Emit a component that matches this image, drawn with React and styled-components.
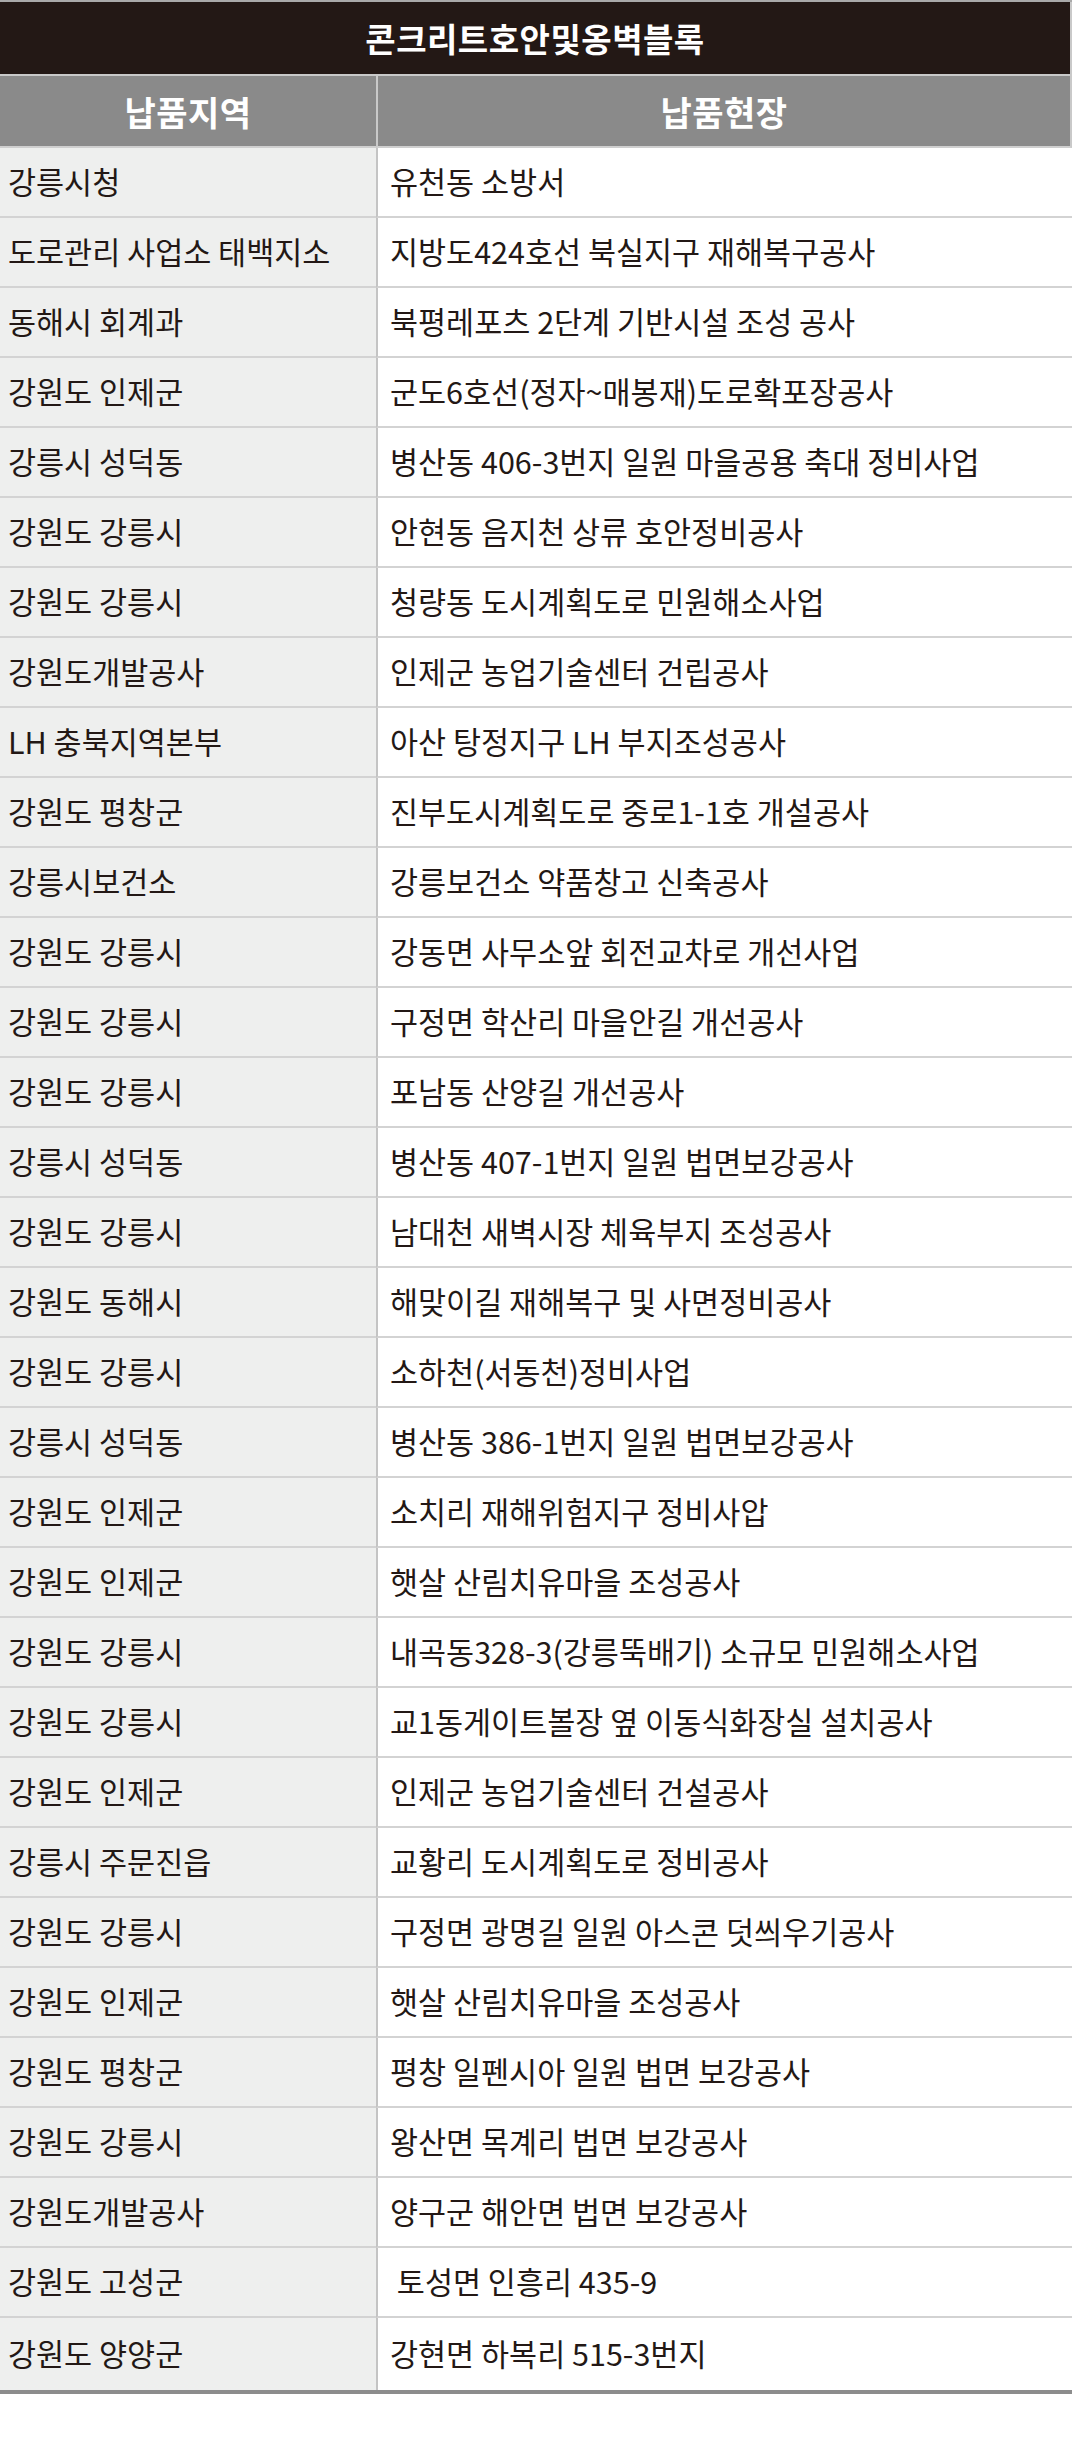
import React from 'react';
import styled, { createGlobalStyle } from 'styled-components';

const GlobalStyle = createGlobalStyle`
    html, body {
        margin: 0;
        padding: 0;
        background: #ffffff;
    }
    body {
        font-family: "Noto Sans CJK KR", "Noto Sans", sans-serif;
        color: #231815;
    }
`;

const deliveries = [
    ['강릉시청', '유천동 소방서'],
    ['도로관리 사업소 태백지소', '지방도424호선 북실지구 재해복구공사'],
    ['동해시 회계과', '북평레포츠 2단계 기반시설 조성 공사'],
    ['강원도 인제군', '군도6호선(정자~매봉재)도로확포장공사'],
    ['강릉시 성덕동', '병산동 406-3번지 일원 마을공용 축대 정비사업'],
    ['강원도 강릉시', '안현동 음지천 상류 호안정비공사'],
    ['강원도 강릉시', '청량동 도시계획도로 민원해소사업'],
    ['강원도개발공사', '인제군 농업기술센터 건립공사'],
    ['LH 충북지역본부', '아산 탕정지구 LH 부지조성공사'],
    ['강원도 평창군', '진부도시계획도로 중로1-1호 개설공사'],
    ['강릉시보건소', '강릉보건소 약품창고 신축공사'],
    ['강원도 강릉시', '강동면 사무소앞 회전교차로 개선사업'],
    ['강원도 강릉시', '구정면 학산리 마을안길 개선공사'],
    ['강원도 강릉시', '포남동 산양길 개선공사'],
    ['강릉시 성덕동', '병산동 407-1번지 일원 법면보강공사'],
    ['강원도 강릉시', '남대천 새벽시장 체육부지 조성공사'],
    ['강원도 동해시', '해맞이길 재해복구 및 사면정비공사'],
    ['강원도 강릉시', '소하천(서동천)정비사업'],
    ['강릉시 성덕동', '병산동 386-1번지 일원 법면보강공사'],
    ['강원도 인제군', '소치리 재해위험지구 정비사압'],
    ['강원도 인제군', '햇살 산림치유마을 조성공사'],
    ['강원도 강릉시', '내곡동328-3(강릉뚝배기) 소규모 민원해소사업'],
    ['강원도 강릉시', '교1동게이트볼장 옆 이동식화장실 설치공사'],
    ['강원도 인제군', '인제군 농업기술센터 건설공사'],
    ['강릉시 주문진읍', '교황리 도시계획도로 정비공사'],
    ['강원도 강릉시', '구정면 광명길 일원 아스콘 덧씌우기공사'],
    ['강원도 인제군', '햇살 산림치유마을 조성공사'],
    ['강원도 평창군', '평창 일펜시아 일원 법면 보강공사'],
    ['강원도 강릉시', '왕산면 목계리 법면 보강공사'],
    ['강원도개발공사', '양구군 해안면 법면 보강공사'],
    ['강원도 고성군', '\u00a0토성면 인흥리 435-9'],
    ['강원도 양양군', '강현면 하복리 515-3번지'],
];

const Table = styled.section`
    width: 1072px;
    border-top: 2px solid #a9a9a9;
    border-bottom: 4px solid #8c8c8c;
    box-sizing: border-box;
`;

const Title = styled.h1`
    margin: 0;
    height: 72px;
    display: flex;
    align-items: center;
    justify-content: center;
    background: #231815;
    color: #ffffff;
    font-size: 33px;
    font-weight: 700;
    letter-spacing: 0.5px;
    border-right: 2px solid #c9c9c9;
    border-bottom: 2px solid #c9c9c9;
`;

const Grid = styled.div`
    display: grid;
    grid-template-columns: 376px 1fr;
`;

const HeadCell = styled.div`
    height: 70px;
    display: flex;
    align-items: center;
    justify-content: center;
    background: #8a8a8a;
    color: #ffffff;
    font-size: 34px;
    font-weight: 700;
    letter-spacing: 0.5px;
    border-bottom: 2px solid #cfcfcf;
    border-left: ${({ $divided }) => ($divided ? '2px solid #c9c9c9' : 'none')};
    border-right: ${({ $divided }) => ($divided ? '2px solid #c9c9c9' : 'none')};
`;

const Cell = styled.div`
    height: 70px;
    display: flex;
    align-items: center;
    padding: 0 0 3px ${({ $site }) => ($site ? '12px' : '8px')};
    box-sizing: border-box;
    background: ${({ $site }) => ($site ? '#ffffff' : '#eeefee')};
    border-bottom: 2px solid #d3d3d3;
    border-left: ${({ $site }) => ($site ? '2px solid #c4c4c4' : 'none')};
    font-size: 30.5px;
    font-weight: 400;
    white-space: pre;
    color: #231815;
`;

const RowGroup = styled.div`
    display: contents;
    &:last-child > div {
        border-bottom: none;
        height: 72px;
    }
`;

const App = () => (
    <>
        <GlobalStyle />
        <Table>
            <Title>콘크리트호안및옹벽블록</Title>
            <Grid>
                <HeadCell>납품지역</HeadCell>
                <HeadCell $divided>납품현장</HeadCell>
                {deliveries.map(([region, site], i) => (
                    <RowGroup key={i}>
                        <Cell>{region}</Cell>
                        <Cell $site>{site}</Cell>
                    </RowGroup>
                ))}
            </Grid>
        </Table>
    </>
);

export default App;
